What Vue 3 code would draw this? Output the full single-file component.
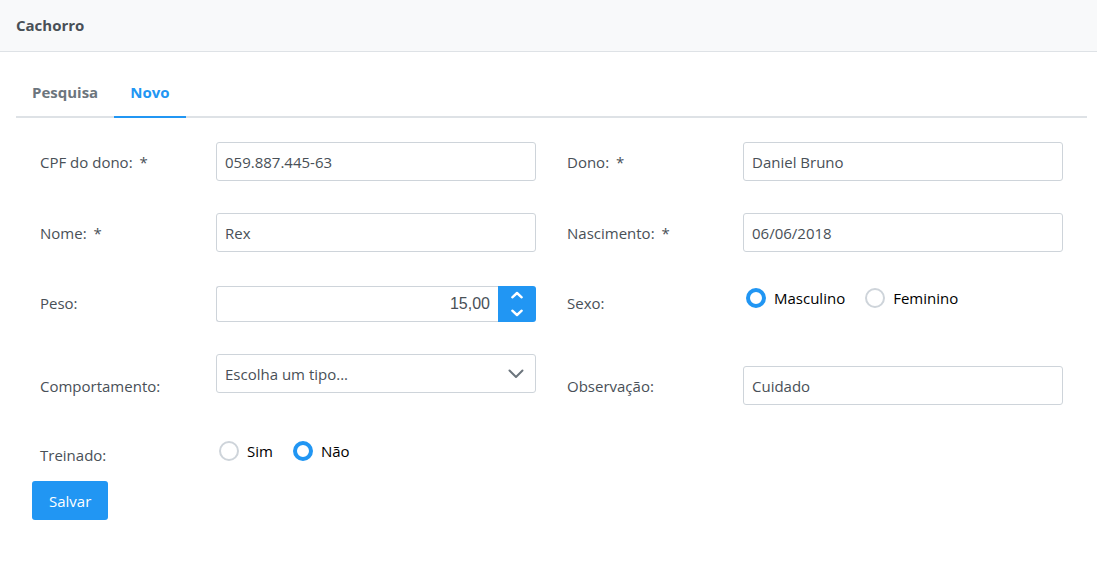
<script setup>
import { ref } from 'vue'

const tab = ref('novo')
const form = ref({
  cpf: '059.887.445-63',
  dono: 'Daniel Bruno',
  nome: 'Rex',
  nascimento: '06/06/2018',
  peso: '15,00',
  sexo: 'M',
  comportamento: '',
  observacao: 'Cuidado',
  treinado: 'N',
})

function step(delta) {
  const value = parseFloat(form.value.peso.replace(',', '.')) || 0
  form.value.peso = (value + delta).toFixed(2).replace('.', ',')
}
</script>

<template>
  <main class="page">
    <header class="panel-header">
      <h1>Cachorro</h1>
    </header>

    <div class="panel-body">
      <div class="tabs" role="tablist">
        <button type="button" role="tab" class="tab" :class="{ active: tab === 'pesquisa' }" :aria-selected="tab === 'pesquisa'" @click="tab = 'pesquisa'">Pesquisa</button>
        <button type="button" role="tab" class="tab" :class="{ active: tab === 'novo' }" :aria-selected="tab === 'novo'" @click="tab = 'novo'">Novo</button>
      </div>

      <form class="form" @submit.prevent>
        <div class="row">
          <div class="pair">
            <label class="caption" for="cpf">CPF do dono: <span class="required">*</span></label>
            <input id="cpf" v-model="form.cpf" class="control" type="text">
          </div>
          <div class="pair">
            <label class="caption" for="dono">Dono: <span class="required">*</span></label>
            <input id="dono" v-model="form.dono" class="control" type="text">
          </div>
        </div>

        <div class="row">
          <div class="pair">
            <label class="caption" for="nome">Nome: <span class="required">*</span></label>
            <input id="nome" v-model="form.nome" class="control" type="text">
          </div>
          <div class="pair">
            <label class="caption" for="nascimento">Nascimento: <span class="required">*</span></label>
            <input id="nascimento" v-model="form.nascimento" class="control" type="text">
          </div>
        </div>

        <div class="row row-weight">
          <div class="pair">
            <label class="caption" for="peso">Peso:</label>
            <div class="spinner">
              <input id="peso" v-model="form.peso" class="control" type="text">
              <div class="spinner-buttons">
                <button type="button" aria-label="Aumentar peso" @click="step(1)">
                  <svg width="14" height="8" viewBox="0 0 14 8"><path d="M2.300 6.300 7 2l4.700 4.300" /></svg>
                </button>
                <button type="button" aria-label="Diminuir peso" @click="step(-1)">
                  <svg width="14" height="8" viewBox="0 0 14 8"><path d="M2.300 1.700 7 6l4.700-4.300" /></svg>
                </button>
              </div>
            </div>
          </div>
          <div class="pair">
            <span id="sexo" class="caption">Sexo:</span>
            <div class="radios" role="radiogroup" aria-labelledby="sexo">
              <label><input v-model="form.sexo" type="radio" name="sexo" value="M">Masculino</label>
              <label><input v-model="form.sexo" type="radio" name="sexo" value="F">Feminino</label>
            </div>
          </div>
        </div>

        <div class="row row-behavior">
          <div class="pair">
            <label class="caption" for="comportamento">Comportamento:</label>
            <div class="dropdown">
              <select id="comportamento" v-model="form.comportamento" class="control">
                <option value="">Escolha um tipo...</option>
              </select>
              <svg width="16" height="10" viewBox="0 0 16 10"><path d="M1.500 1.500 8 8l6.500-6.500" /></svg>
            </div>
          </div>
          <div class="pair">
            <label class="caption" for="observacao">Observação:</label>
            <input id="observacao" v-model="form.observacao" class="control" type="text">
          </div>
        </div>

        <div class="row row-trained">
          <div class="pair">
            <span id="treinado" class="caption">Treinado:</span>
            <div class="radios" role="radiogroup" aria-labelledby="treinado">
              <label><input v-model="form.treinado" type="radio" name="treinado" value="S">Sim</label>
              <label><input v-model="form.treinado" type="radio" name="treinado" value="N">Não</label>
            </div>
          </div>
        </div>

        <button class="save" type="submit">Salvar</button>
      </form>
    </div>
  </main>
</template>

<style>
body {
  margin: 0;
  background: #fff;
}
</style>

<style scoped>
.page {
  font-family: "Open Sans", "Noto Sans", sans-serif;
  font-size: 15px;
  line-height: 21px;
  color: #495057;
}
.page *,
.page *::before {
  box-sizing: border-box;
}
.panel-header {
  padding: 15px 16px;
  background: #f8f9fa;
  border-bottom: 1px solid #dee2e6;
}
h1 {
  margin: 0;
  font-size: 15px;
  font-weight: 700;
  line-height: 21px;
}
.panel-body {
  padding: 16px 10px 16px 16px;
}
.tabs {
  display: flex;
  border-bottom: 2px solid #dee2e6;
}
.tab {
  height: 50px;
  margin-bottom: -2px;
  padding: 0 16px;
  border: 0;
  border-bottom: 2px solid transparent;
  background: none;
  font: inherit;
  font-weight: 700;
  color: #6c757d;
}
.tab.active {
  color: #2196f3;
  border-color: #2196f3;
}
.form {
  display: flex;
  flex-direction: column;
  gap: 32px;
  padding: 24px 24px 0;
}
.row {
  display: grid;
  grid-template-columns: 1fr 1fr;
  gap: 31px;
}
.pair {
  display: grid;
  grid-template-columns: 11fr 20fr;
  align-items: center;
}
.caption {
  line-height: 22px;
}
.required {
  margin-left: 3px;
}
.control {
  display: block;
  width: 100%;
  min-width: 0;
  height: 39px;
  padding: 0 8px;
  border: 1px solid #ced4da;
  border-radius: 3px;
  background: #fff;
  font: inherit;
  color: #495057;
}
.row-weight {
  min-height: 38px;
}
.spinner {
  display: flex;
  align-self: end;
}
.spinner .control {
  flex: 1;
  height: 36px;
  border-right: 0;
  border-radius: 3px 0 0 3px;
  font-family: "Liberation Sans", Arial, sans-serif;
  font-size: 16px;
  text-align: right;
}
.spinner-buttons {
  display: grid;
  grid-template-rows: 1fr 1fr;
  width: 38px;
  overflow: hidden;
  border-radius: 0 3px 3px 0;
  background: #2196f3;
}
.spinner-buttons button {
  display: flex;
  align-items: center;
  justify-content: center;
  padding: 0;
  border: 0;
  background: none;
}
.spinner-buttons path {
  fill: none;
  stroke: #fff;
  stroke-width: 2.4;
  stroke-linecap: round;
  stroke-linejoin: round;
}
.radios {
  display: flex;
  align-self: start;
  gap: 20px;
  height: 28px;
  padding-left: 3px;
  color: #000;
}
.radios label {
  display: flex;
  align-items: center;
  gap: 8px;
}
.radios input {
  appearance: none;
  width: 20px;
  height: 20px;
  margin: 0;
  border: 2px solid #ced4da;
  border-radius: 50%;
  background: #fff;
}
.radios input:checked {
  border: 4px solid #2196f3;
}
.row-behavior {
  min-height: 51px;
}
.row-behavior .caption {
  align-self: end;
  padding: 9px 0 8px;
}
.row-behavior .control {
  align-self: end;
}
.dropdown {
  position: relative;
  align-self: start;
}
.dropdown select {
  appearance: none;
  padding-top: 1px;
}
.dropdown svg {
  position: absolute;
  top: 15px;
  right: 12px;
  pointer-events: none;
}
.dropdown path {
  fill: none;
  stroke: #6c757d;
  stroke-width: 2;
  stroke-linecap: round;
  stroke-linejoin: round;
}
.row-trained {
  min-height: 36px;
}
.save {
  align-self: flex-start;
  height: 39px;
  margin: -24px 0 0 -8px;
  padding: 1px 17px 0;
  border: 0;
  border-radius: 3px;
  background: #2196f3;
  font: inherit;
  color: #fff;
}
</style>
